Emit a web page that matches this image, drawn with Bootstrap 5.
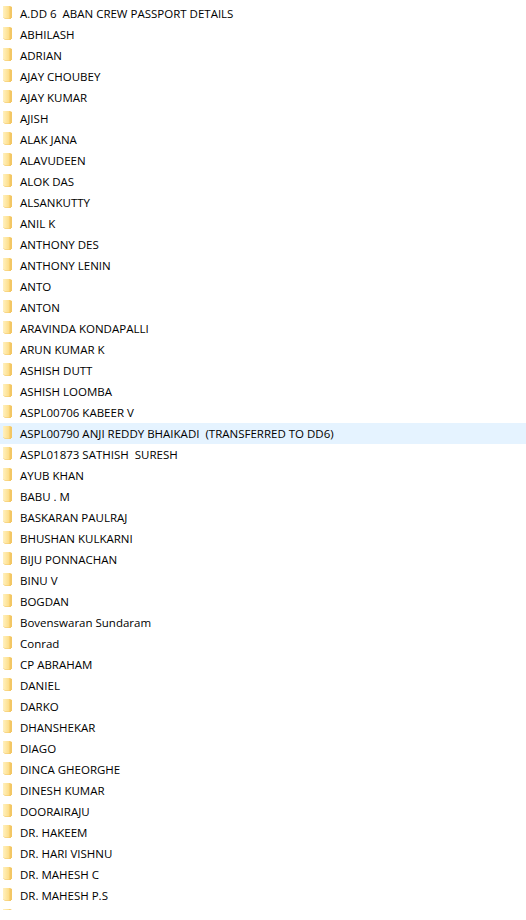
<!DOCTYPE html>
<html lang="en">

<head>
    <meta charset="UTF-8">
    <title>Folder list</title>
    <link rel="stylesheet" href="https://cdn.jsdelivr.net/npm/bootstrap@5.3.0/dist/css/bootstrap.min.css">
    <style>
        body {
            background: #fff;
            font-family: "Open Sans", "Noto Sans", sans-serif;
            font-size: 11.5px;
            color: #000;
        }

        .folder-list {
            height: 910px;
            padding-top: 3px;
            overflow: hidden;
        }

        .folder-row {
            height: 21px;
            padding-left: 3px;
            gap: 8px;
            white-space: pre;
            line-height: 22px;
        }

        .folder-row.picked {
            background: #e5f3ff;
        }

        .folder-ico {
            width: 9px;
            height: 13px;
            margin-top: 3px;
            flex: none;
        }
    </style>
</head>

<body>
    <svg width="0" height="0" class="d-block">
        <defs>
            <linearGradient id="front" x1="0" y1="0" x2="1" y2="0">
                <stop offset="0" stop-color="#fff1c0"/>
                <stop offset="1" stop-color="#fddc85"/>
            </linearGradient>
        </defs>
    </svg>

    <div id="folders" class="folder-list"></div>

    <script>
        const names = [
            "A.DD 6  ABAN CREW PASSPORT DETAILS", "ABHILASH", "ADRIAN", "AJAY CHOUBEY", "AJAY KUMAR", "AJISH",
            "ALAK JANA", "ALAVUDEEN", "ALOK DAS", "ALSANKUTTY", "ANIL K", "ANTHONY DES", "ANTHONY LENIN", "ANTO",
            "ANTON", "ARAVINDA KONDAPALLI", "ARUN KUMAR K", "ASHISH DUTT", "ASHISH LOOMBA", "ASPL00706 KABEER V",
            "ASPL00790 ANJI REDDY BHAIKADI  (TRANSFERRED TO DD6)", "ASPL01873 SATHISH  SURESH", "AYUB KHAN",
            "BABU . M", "BASKARAN PAULRAJ", "BHUSHAN KULKARNI", "BIJU PONNACHAN", "BINU V", "BOGDAN",
            "Bovenswaran Sundaram", "Conrad", "CP ABRAHAM", "DANIEL", "DARKO", "DHANSHEKAR", "DIAGO",
            "DINCA GHEORGHE", "DINESH KUMAR", "DOORAIRAJU", "DR. HAKEEM", "DR. HARI VISHNU", "DR. MAHESH C",
            "DR. MAHESH P.S", ""
        ];

        const icon = `<svg class="folder-ico" viewBox="0 0 9 13">
            <path d="M0 0H7L9 1V12H8V13H2L0 11Z" fill="#f3c765"/>
            <path d="M0 0H6.5V12.5H2L0 10.5Z" fill="url(#front)"/>
        </svg>`;

        document.getElementById('folders').innerHTML = names.map((name, i) => `
            <div class="folder-row d-flex ${i === 20 ? 'picked' : ''}">${icon}<span>${name}</span></div>
        `).join('');
    </script>
</body>

</html>
